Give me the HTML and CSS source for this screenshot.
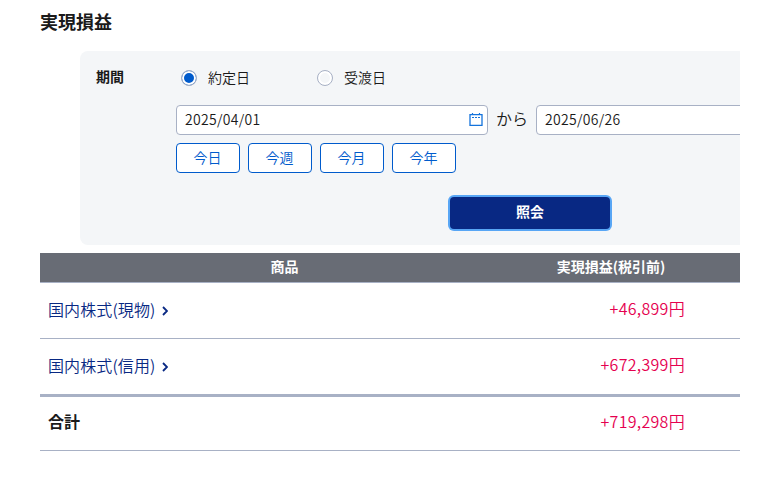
FILE: index.html
```html
<!doctype html>
<html lang="ja">
  <head>
    <meta charset="UTF-8" />
    <meta name="viewport" content="width=device-width, initial-scale=1.0" />
    <title>実現損益</title>
    <link rel="stylesheet" href="styles.css">
  </head>
  <body>
    <main class="page">
      <h1>実現損益</h1>

      <form class="search">
        <div class="period">
          <div class="period-label">期間</div>
          <div class="period-body">
            <div class="radios">
              <label class="radio"><input type="radio" name="dateType" checked /><span>約定日</span></label>
              <label class="radio"><input type="radio" name="dateType" /><span>受渡日</span></label>
            </div>
            <div class="dates">
              <div class="date-field">
                <span>2025/04/01</span>
                <svg class="calendar" width="14" height="14" viewBox="0 0 14 14">
                  <path d="M1 1.6h12v10.8H1z" fill="none" stroke="#1473dc" stroke-width="1.3" />
                  <path d="M3.5 0v2M10.5 0v2" stroke="#1473dc" stroke-width="1.2" />
                  <path d="M3 4.5h8" stroke="#1473dc" stroke-width="1" stroke-dasharray="2 1" />
                </svg>
              </div>
              <span class="from">から</span>
              <div class="date-field">
                <span>2025/06/26</span>
              </div>
            </div>
            <div class="shortcuts">
              <button type="button">今日</button>
              <button type="button">今週</button>
              <button type="button">今月</button>
              <button type="button">今年</button>
            </div>
          </div>
        </div>
        <button type="button" class="submit">照会</button>
      </form>

      <table class="result">
        <thead>
          <tr>
            <th class="col-product">商品</th>
            <th class="col-profit">実現損益(税引前)</th>
            <th></th>
          </tr>
        </thead>
        <tbody>
          <tr>
            <td class="product">
              <a href="#">国内株式(現物)<svg class="arrow" width="6" height="10" viewBox="0 0 6 10"><path d="M1 1l4 4-4 4" /></svg></a>
            </td>
            <td class="amount">+46,899円</td>
            <td></td>
          </tr>
          <tr>
            <td class="product">
              <a href="#">国内株式(信用)<svg class="arrow" width="6" height="10" viewBox="0 0 6 10"><path d="M1 1l4 4-4 4" /></svg></a>
            </td>
            <td class="amount">+672,399円</td>
            <td></td>
          </tr>
        </tbody>
        <tfoot>
          <tr>
            <th>合計</th>
            <td class="amount">+719,298円</td>
            <td></td>
          </tr>
        </tfoot>
      </table>
    </main>
  </body>
</html>
```
FILE: styles.css
```css
* {
  box-sizing: border-box;
}
body {
  margin: 0;
  background: #fff;
  color: #1a1a1a;
  font-family: "Noto Sans CJK JP", sans-serif;
  font-size: 14px;
  font-weight: 350;
  line-height: 20px;
}
.page {
  width: 700px;
  margin-left: 40px;
  overflow: hidden;
}
h1 {
  margin: 0;
  padding: 8px 0 17px;
  font-size: 18px;
  font-weight: 700;
  line-height: 26px;
}
.search {
  width: 900px;
  height: 194px;
  margin-left: 40px;
  padding: 16px;
  background: #f4f6f8;
  border-radius: 8px;
}
.period {
  display: flex;
}
.period-label {
  width: 80px;
  font-weight: 700;
  line-height: 18px;
}
.radios {
  display: flex;
  gap: 67px;
  height: 22px;
  margin-left: 5px;
}
.radio {
  display: flex;
  align-items: center;
  gap: 11px;
}
.radio span {
  padding-bottom: 2px;
}
.radio input {
  appearance: none;
  width: 16px;
  height: 16px;
  margin: 0;
  border: 1px solid #a8b1c5;
  border-radius: 50%;
  background: #f4f6f8;
  box-shadow: inset 0 0 0 2px #fff;
}
.radio input:checked {
  background: #005bcc;
}
.dates {
  display: flex;
  align-items: center;
  margin-top: 16px;
}
.date-field {
  display: flex;
  align-items: center;
  justify-content: space-between;
  width: 312px;
  height: 30px;
  padding: 0 4px 2px 8px;
  border: 1px solid #a8b1c5;
  border-radius: 4px;
  background: #fff;
  letter-spacing: 0.3px;
}
.calendar {
  margin-top: 1px;
}
.from {
  width: 48px;
  padding-bottom: 4px;
  font-size: 16px;
  text-align: center;
}
.shortcuts {
  display: flex;
  gap: 8px;
  margin-top: 8px;
}
.shortcuts button {
  width: 64px;
  height: 30px;
  padding: 0 1px 2px 0;
  border: 1px solid #005bcc;
  border-radius: 4px;
  background: #fff;
  color: #005bcc;
  font: inherit;
}
.submit {
  display: block;
  width: 160px;
  height: 32px;
  margin: 24px auto 0;
  padding: 0 0 4px;
  border: 0;
  border-radius: 4px;
  background: #082883;
  box-shadow: 0 0 0 2px #58a6f5;
  color: #fff;
  font: inherit;
  font-weight: 700;
}
.result {
  width: 980px;
  margin-top: 8px;
  border-collapse: separate;
  border-spacing: 0;
  table-layout: fixed;
}
.result th,
.result td {
  height: 56px;
  padding: 0 8px 5px;
  border-bottom: 1px solid #a8b1c5;
  font-size: 16px;
  line-height: 24px;
  text-align: left;
}
.result .product {
  padding-bottom: 3px;
}
.result thead th {
  height: 30px;
  padding: 0 9px 3px 8px;
  background: #686c75;
  color: #fff;
  font-size: 14px;
  line-height: 20px;
  text-align: center;
}
.result .col-product {
  width: 490px;
}
.result .col-profit {
  width: 163px;
  white-space: nowrap;
}
.result tbody tr:last-child td {
  height: 58px;
  border-bottom-width: 3px;
}
.result tfoot th,
.result tfoot td {
  height: 54px;
}
.result a {
  color: #082883;
  letter-spacing: 0.1px;
  text-decoration: none;
}
.result .amount {
  color: #e5004f;
  letter-spacing: 0.3px;
  text-align: right;
}
.arrow {
  margin-left: 7px;
  vertical-align: 0;
  fill: none;
  stroke: #082883;
  stroke-width: 1.8;
}
```
